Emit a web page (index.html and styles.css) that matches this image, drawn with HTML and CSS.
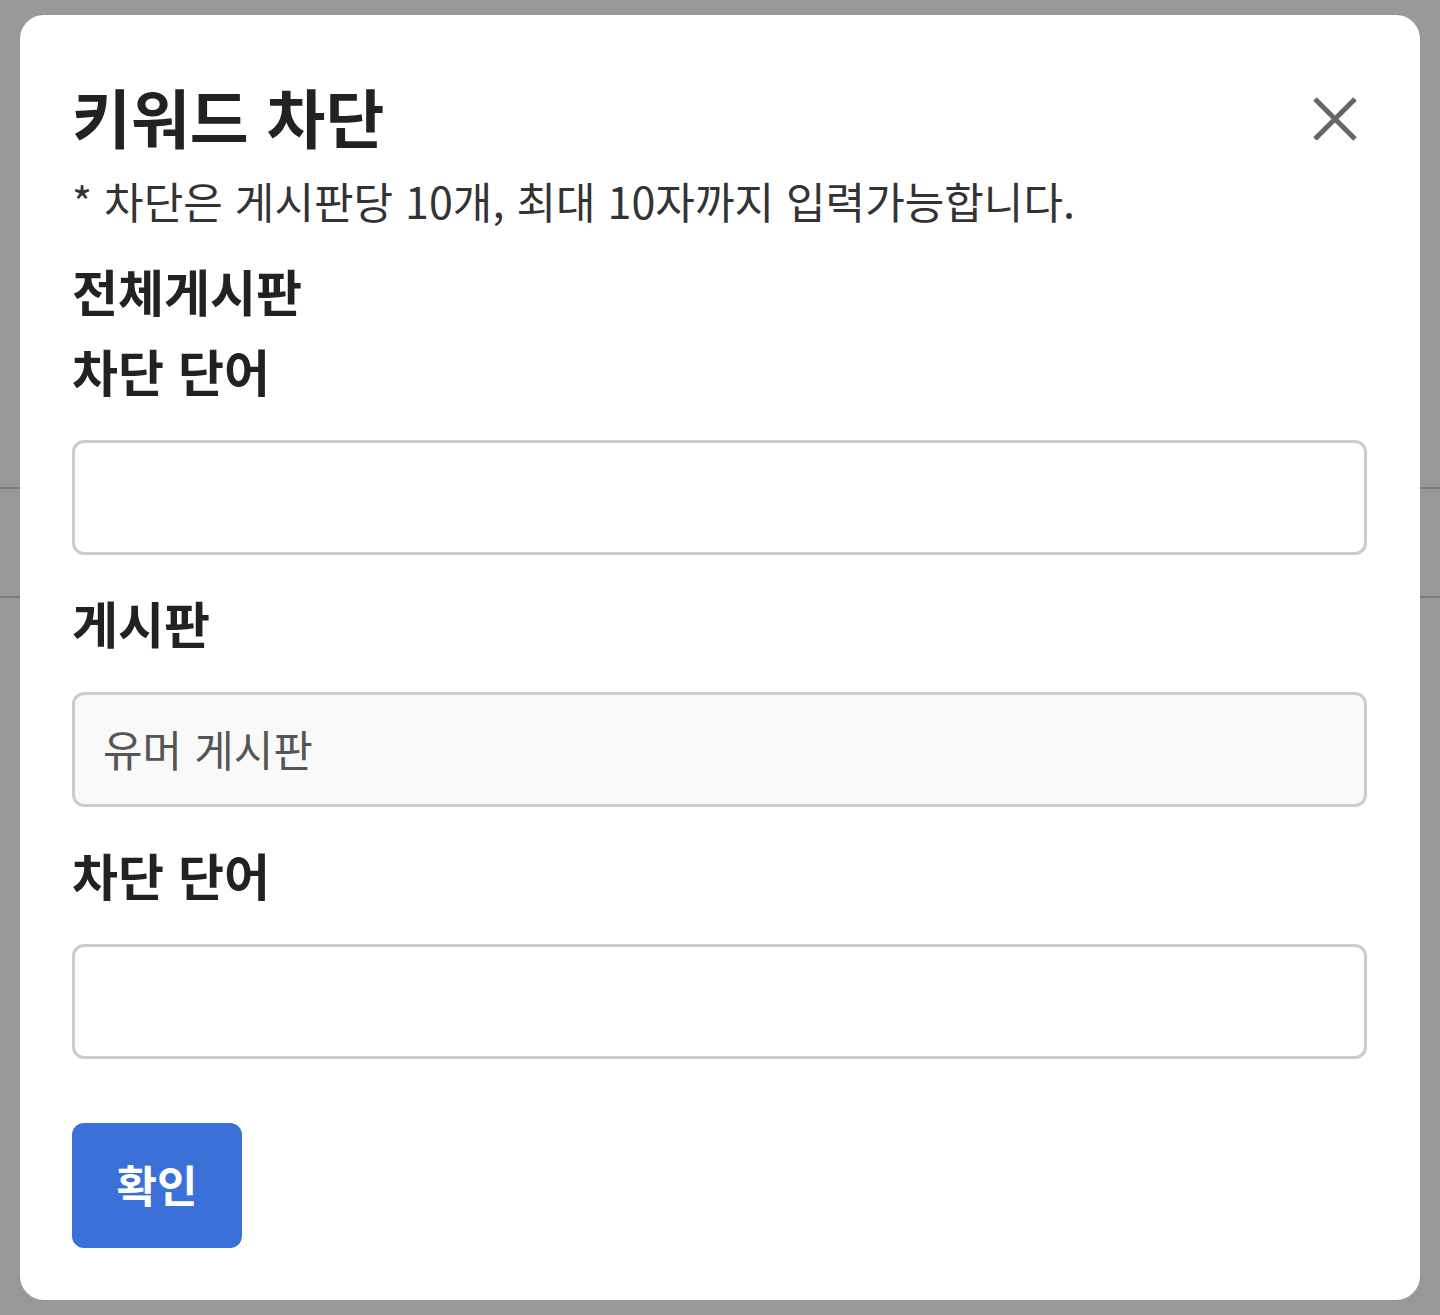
FILE: index.html
```html
<!DOCTYPE html>
<html lang="ko">
<head>
    <meta charset="UTF-8">
    <meta name="viewport" content="width=device-width, initial-scale=1.0">
    <title>키워드 차단</title>
    <link rel="stylesheet" href="styles.css">
</head>
<body>

<div class="page">
    <div class="page-line first"></div>
    <div class="page-line"></div>
</div>

<div class="overlay">
    <div class="modal">
        <div class="modal-head">
            <h1 class="modal-title">키워드 차단</h1>
            <button class="close-btn" aria-label="닫기">
                <svg width="48" height="48" viewBox="0 0 48 48">
                    <path d="M4 4 L44 44 M44 4 L4 44" stroke="#666" stroke-width="5" fill="none"/>
                </svg>
            </button>
        </div>
        <p class="notice">* 차단은 게시판당 10개, 최대 10자까지 입력가능합니다.</p>

        <div class="board-name">전체게시판</div>
        <label class="field-label" for="word-all">차단 단어</label>
        <input class="field" type="text" id="word-all">

        <label class="field-label" for="board">게시판</label>
        <input class="field readonly" type="text" id="board" value="유머 게시판" readonly>

        <label class="field-label" for="word-board">차단 단어</label>
        <input class="field" type="text" id="word-board">

        <button class="confirm-btn">확인</button>
    </div>
</div>

</body>
</html>
```

FILE: styles.css
```css
body{
    margin:0;
    padding:0;
    font-family:"Noto Sans CJK KR", "Noto Sans", sans-serif;
    background-color:#ffffff;
}
.page{
    height:1315px;
    padding-top:487px;
    box-sizing:border-box;
}
.page-line{
    height:2px;
    background-color:#cdcdcd;
}
.page-line.first{
    margin-bottom:107px;
}
.overlay{
    position:fixed;
    top:0;
    left:0;
    right:0;
    bottom:0;
    background-color:rgba(0, 0, 0, 0.4);
    padding:15px 20px;
}
.modal{
    display:flex;
    flex-direction:column;
    align-items:flex-start;
    background-color:white;
    border-radius:24px;
    padding:64px 53px 52px 52px;
    color:#222;
}
.modal-head{
    display:flex;
    justify-content:space-between;
    align-items:center;
    width:100%;
}
.modal-title{
    margin:0;
    font-size:64px;
    line-height:72px;
    font-weight:700;
}
.close-btn{
    background:none;
    border:none;
    padding:0 0 0 0;
    margin-right:8px;
    margin-top:8px;
    display:flex;
    cursor:pointer;
}
.notice{
    margin:24px 0 0 0;
    font-size:43px;
    line-height:50px;
    color:#333;
}
.board-name{
    margin-top:37px;
    font-size:50px;
    line-height:56px;
    font-weight:700;
}
.field-label{
    display:block;
    margin-top:39px;
    font-size:50px;
    line-height:56px;
    font-weight:700;
}
.board-name + .field-label{
    margin-top:24px;
}
.field{
    width:100%;
    height:115px;
    margin-top:42px;
    padding:0 28px 4px 28px;
    box-sizing:border-box;
    border:3px solid #cccccc;
    border-radius:12px;
    background-color:#fff;
    font-family:inherit;
    font-size:43px;
    color:#555;
    outline:none;
}
.field.readonly{
    background-color:#f9f9f9;
}
.confirm-btn{
    margin-top:64px;
    width:170px;
    height:125px;
    padding:0 0 4px 0;
    border:none;
    border-radius:12px;
    background-color:#3a70d8;
    color:white;
    font-family:inherit;
    font-size:44px;
    font-weight:700;
    cursor:pointer;
}
```
